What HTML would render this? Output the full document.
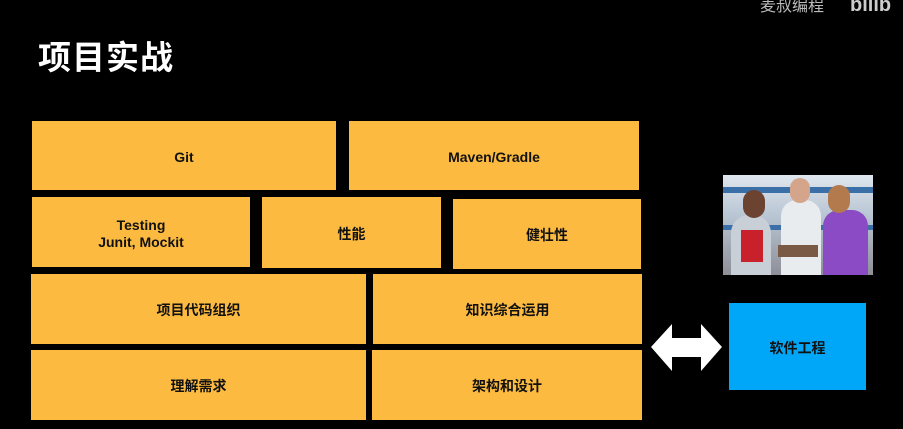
<!DOCTYPE html>
<html><head><meta charset="utf-8"><style>
body{margin:0;width:903px;height:429px;background:#000;position:relative;overflow:hidden;font-family:"Liberation Sans","Noto Sans CJK SC",sans-serif}
.b{position:absolute;background:#fcbb40;display:flex;align-items:center;justify-content:center;text-align:center;font-size:14px;color:#111;line-height:17px;font-weight:bold;padding-top:3px;box-sizing:border-box}
</style></head><body>
<div style="position:absolute;left:38px;top:31px;color:#fff;font-size:33px;font-weight:bold;letter-spacing:1px">项目实战</div>
<div style="position:absolute;left:760px;top:-8px;color:#bbb;font-size:16px">麦叔编程</div>
<div style="position:absolute;left:850px;top:-6px;color:#ccc;font-size:20px;font-weight:bold">bilib</div>
<div class="b" style="left:32px;top:121px;width:304px;height:69px">Git</div>
<div class="b" style="left:349px;top:121px;width:290px;height:69px">Maven/Gradle</div>
<div class="b" style="left:32px;top:197px;width:218px;height:70px">Testing<br>Junit, Mockit</div>
<div class="b" style="left:262px;top:197px;width:179px;height:71px">性能</div>
<div class="b" style="left:453px;top:199px;width:188px;height:70px">健壮性</div>
<div class="b" style="left:31px;top:274px;width:335px;height:70px">项目代码组织</div>
<div class="b" style="left:373px;top:274px;width:269px;height:70px">知识综合运用</div>
<div class="b" style="left:31px;top:350px;width:335px;height:70px">理解需求</div>
<div class="b" style="left:372px;top:350px;width:270px;height:70px">架构和设计</div>
<div style="position:absolute;left:723px;top:175px;width:150px;height:100px;background:linear-gradient(#dfe6ee,#b9c6d4 40%,#8e8f98);overflow:hidden">
<div style="position:absolute;left:0;top:12px;width:150px;height:6px;background:#3b6fa8"></div>
<div style="position:absolute;left:0;top:50px;width:150px;height:5px;background:#3b6fa8"></div>
<div style="position:absolute;left:8px;top:40px;width:40px;height:60px;background:#c9cfd6;border-radius:18px 18px 0 0"></div>
<div style="position:absolute;left:20px;top:15px;width:22px;height:28px;background:#6b4330;border-radius:11px"></div>
<div style="position:absolute;left:18px;top:55px;width:22px;height:32px;background:#c8212b"></div>
<div style="position:absolute;left:58px;top:25px;width:40px;height:75px;background:#e9ecef;border-radius:16px 16px 0 0"></div>
<div style="position:absolute;left:67px;top:3px;width:20px;height:25px;background:#d4a58b;border-radius:10px"></div>
<div style="position:absolute;left:55px;top:70px;width:40px;height:12px;background:#7a5a44"></div>
<div style="position:absolute;left:100px;top:35px;width:45px;height:65px;background:#8a4bc4;border-radius:16px 16px 0 0"></div>
<div style="position:absolute;left:105px;top:10px;width:22px;height:28px;background:#b27a4d;border-radius:11px"></div>
</div>
<svg style="position:absolute;left:651px;top:324px" width="71" height="47"><polygon points="0,23 21,0 21,14 50,14 50,0 71,23 50,47 50,33 21,33 21,47" fill="#fff"/></svg>
<div class="b" style="left:729px;top:303px;width:137px;height:87px;background:#00a6f7">软件工程</div>
</body></html>
